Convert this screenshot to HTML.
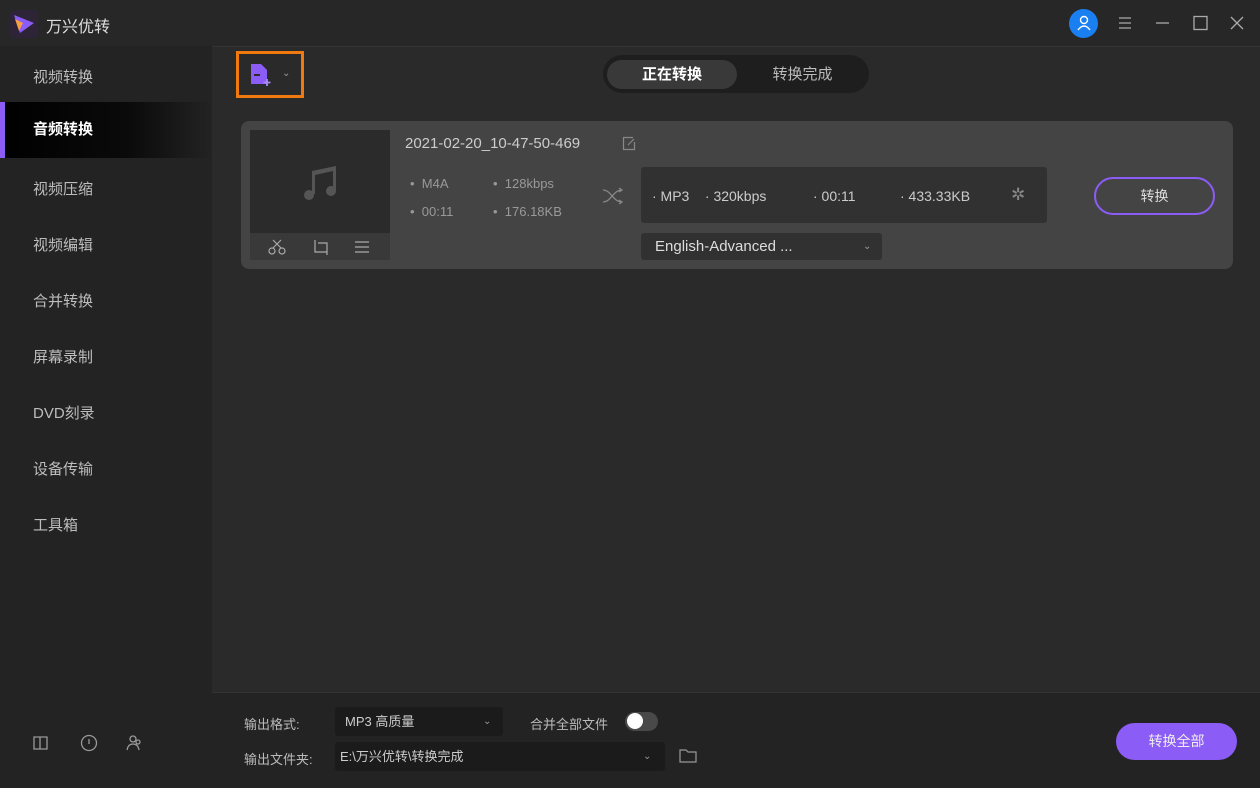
<!DOCTYPE html>
<html><head><meta charset="utf-8"><style>
*{margin:0;padding:0;box-sizing:border-box}
body{width:1260px;height:788px;background:#2b2a2b;font-family:"Liberation Sans","Noto Sans CJK SC",sans-serif;color:#ccc;position:relative;overflow:hidden}
.a{position:absolute}
.side{left:0;top:46px;width:212px;height:742px;background:#242324}
.nav{position:absolute;left:0;width:212px;height:56px;line-height:56px;padding-left:33px;font-size:15px;color:#bdbdbd}
.nav.on{background:linear-gradient(90deg,#000 0%,#0a0a0a 60%,#242324 100%);color:#fff;font-weight:bold}
.nav.on:before{content:"";position:absolute;left:0;top:0;width:5px;height:56px;background:#8b5cf6}
.dot{color:#999;font-size:13px}
</style></head><body>
<div class="a" style="left:0;top:0;width:1260px;height:46px;background:#282728"></div>
<svg class="a" style="left:10px;top:10px" width="28" height="28" viewBox="0 0 28 28"><rect width="28" height="28" rx="5" fill="#2d2438"/><path d="M4 5 L24 13 L10 23 Z" fill="#8b5cf6"/><path d="M5 9 L13 13 L9 21 Z" fill="#f59e42"/></svg>
<div class="a" style="left:46px;top:13px;font-size:16px;color:#ddd">万兴优转</div>
<div class="a" style="left:1069px;top:9px;width:29px;height:29px;border-radius:50%;background:#1a7ff0"></div>
<svg class="a" style="left:1075px;top:14px" width="18" height="18" viewBox="0 0 18 18" fill="none" stroke="#fff" stroke-width="1.4"><circle cx="9" cy="6" r="3.5"/><path d="M3 16 Q9 8 15 16"/></svg>
<svg class="a" style="left:1116px;top:14px" width="132" height="18" viewBox="0 0 132 18" fill="none" stroke="#aaa" stroke-width="1.3"><path d="M3 4h12M3 9h12M3 14h12"/><path d="M40 9h13"/><rect x="78" y="2.5" width="13" height="13"/><path d="M115 3l12 12M127 3l-12 12"/></svg>
<div class="a side"></div>
<div class="nav" style="top:50px">视频转换</div>
<div class="nav on" style="top:102px">音频转换</div>
<div class="nav" style="top:162px">视频压缩</div>
<div class="nav" style="top:218px">视频编辑</div>
<div class="nav" style="top:274px">合并转换</div>
<div class="nav" style="top:330px">屏幕录制</div>
<div class="nav" style="top:386px">DVD刻录</div>
<div class="nav" style="top:442px">设备传输</div>
<div class="nav" style="top:498px">工具箱</div>
<svg class="a" style="left:32px;top:733px" width="120" height="20" viewBox="0 0 120 20" fill="none" stroke="#999" stroke-width="1.3"><path d="M2 4h6v12H2zM8 4h7v12H8z"/><circle cx="57" cy="10" r="7.5"/><path d="M57 6v5"/><circle cx="101" cy="6" r="3"/><path d="M95 17q1-6 6-6t6 6"/><circle cx="106" cy="9" r="2"/></svg>
<div class="a" style="left:212px;top:46px;width:1048px;height:1px;background:#333"></div>
<div class="a" style="left:236px;top:51px;width:68px;height:47px;border:3px solid #f07a10"></div>
<svg class="a" style="left:249px;top:62px" width="24" height="26" viewBox="0 0 24 26"><path d="M2 2h10l6 6v14H2z" fill="#8b5cf6"/><rect x="5" y="12" width="6" height="2" fill="#2b2a2b"/><path d="M18 17v7M14.5 20.5h7" stroke="#a78bfa" stroke-width="1.8"/></svg>
<div class="a" style="left:282px;top:68px;font-size:10px;color:#999">⌄</div>
<div class="a" style="left:603px;top:55px;width:266px;height:38px;border-radius:19px;background:#1f1e1f"></div>
<div class="a" style="left:607px;top:60px;width:130px;height:29px;border-radius:15px;background:#3a393a;color:#fff;font-weight:bold;font-size:15px;text-align:center;line-height:29px">正在转换</div>
<div class="a" style="left:740px;top:60px;width:125px;height:29px;color:#bbb;font-size:15px;text-align:center;line-height:29px">转换完成</div>
<div class="a" style="left:241px;top:121px;width:992px;height:148px;border-radius:8px;background:#454445"></div>
<div class="a" style="left:250px;top:130px;width:140px;height:103px;background:#2c2b2c"></div>
<div class="a" style="left:250px;top:233px;width:140px;height:27px;background:#3a393a"></div>
<svg class="a" style="left:300px;top:163px" width="40" height="40" viewBox="0 0 40 40" fill="#555"><path d="M12 8l24-5v24h-3V8L15 12v19h-3z"/><circle cx="9" cy="32" r="5"/><circle cx="31" cy="28" r="5"/></svg>
<svg class="a" style="left:268px;top:238px" width="110" height="18" viewBox="0 0 110 18" fill="none" stroke="#aaa" stroke-width="1.2"><circle cx="4" cy="13" r="3"/><circle cx="14" cy="13" r="3"/><path d="M5 10L13 2M13 10L5 2"/><path d="M47 2v12h12M50 5h9v12"/><path d="M87 4h14M87 9h14M87 14h14"/></svg>
<div class="a" style="left:405px;top:135px;font-size:15px;color:#ccc">2021-02-20_10-47-50-469</div>
<svg class="a" style="left:621px;top:136px" width="16" height="16" viewBox="0 0 16 16" fill="none" stroke="#888" stroke-width="1.2"><path d="M12 1.5H2.5v12h11V6"/><path d="M7 9l6-6"/></svg>
<div class="a dot" style="left:410px;top:176px">•&nbsp; M4A</div>
<div class="a dot" style="left:493px;top:176px">•&nbsp; 128kbps</div>
<div class="a dot" style="left:410px;top:204px">•&nbsp; 00:11</div>
<div class="a dot" style="left:493px;top:204px">•&nbsp; 176.18KB</div>
<svg class="a" style="left:602px;top:187px" width="22" height="18" viewBox="0 0 22 18" fill="none" stroke="#888" stroke-width="1.3"><path d="M1 3c8 0 10 12 19 12M1 15c8 0 10-12 19-12M17 1l3 2-3 2M17 13l3 2-3 2"/></svg>
<div class="a" style="left:641px;top:167px;width:406px;height:56px;background:#323132;border-radius:3px"></div>
<div class="a" style="left:652px;top:188px;font-size:14px;color:#ccc">· MP3&nbsp;&nbsp;&nbsp;&nbsp;· 320kbps</div>
<div class="a" style="left:813px;top:188px;font-size:14px;color:#ccc">· 00:11</div>
<div class="a" style="left:900px;top:188px;font-size:14px;color:#ccc">· 433.33KB</div>
<div class="a" style="left:1011px;top:185px;font-size:17px;color:#888">✲</div>
<div class="a" style="left:641px;top:233px;width:241px;height:27px;background:#323132;border-radius:3px;padding-left:14px;line-height:27px;font-size:15px;color:#ddd">English-Advanced ...<span style="position:absolute;left:222px;font-size:10px;color:#999">⌄</span></div>
<div class="a" style="left:1094px;top:177px;width:121px;height:38px;border-radius:19px;border:2px solid #8b5cf6;text-align:center;line-height:34px;font-size:14px;color:#ddd">转换</div>
<div class="a" style="left:212px;top:692px;width:1048px;height:96px;background:#242324;border-top:1px solid #333"></div>
<div class="a" style="left:244px;top:714px;font-size:13px;color:#bbb">输出格式:</div>
<div class="a" style="left:335px;top:707px;width:168px;height:29px;background:#1c1b1c;border-radius:3px;padding-left:10px;line-height:29px;font-size:13px;color:#ccc">MP3 高质量<span style="position:absolute;left:148px;font-size:10px;color:#999">⌄</span></div>
<div class="a" style="left:530px;top:714px;font-size:13px;color:#bbb">合并全部文件</div>
<div class="a" style="left:625px;top:712px;width:33px;height:19px;border-radius:10px;background:#4a494a"></div>
<div class="a" style="left:627px;top:713px;width:16px;height:16px;border-radius:50%;background:#fff"></div>
<div class="a" style="left:244px;top:749px;font-size:13px;color:#bbb">输出文件夹:</div>
<div class="a" style="left:335px;top:742px;width:330px;height:29px;background:#1c1b1c;border-radius:3px;padding-left:5px;line-height:29px;font-size:13px;color:#ccc">E:\万兴优转\转换完成<span style="position:absolute;left:308px;font-size:10px;color:#999">⌄</span></div>
<svg class="a" style="left:679px;top:748px" width="18" height="16" viewBox="0 0 18 16" fill="none" stroke="#999" stroke-width="1.2"><path d="M1 2h6l2 2h8v10H1z"/></svg>
<div class="a" style="left:1116px;top:723px;width:121px;height:37px;border-radius:19px;background:#8b5cf6;text-align:center;line-height:37px;font-size:14px;color:#eee">转换全部</div>
</body></html>
